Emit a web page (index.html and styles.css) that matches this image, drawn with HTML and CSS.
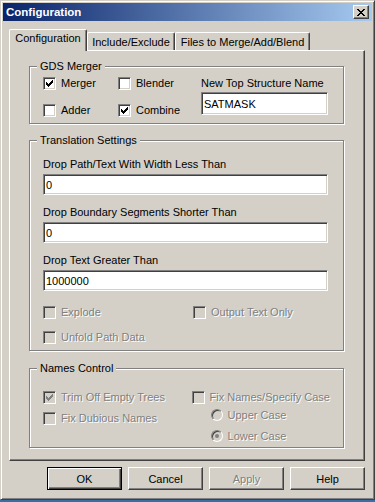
FILE: index.html
```html
<!DOCTYPE html>
<html lang="en">
<head>
    <meta charset="UTF-8">
    <meta name="viewport" content="width=device-width, initial-scale=1.0">
    <title>Configuration</title>
    <link rel="stylesheet" href="styles.css">
</head>
<body>
    <div class="window">
        <div class="titlebar">
            <span class="title">Configuration</span>
            <span class="close-btn">
                <svg width="8" height="7" viewBox="0 0 8 7" shape-rendering="crispEdges">
                    <path d="M0 0h2v1h-2zM6 0h2v1h-2zM1 1h2v1h-2zM5 1h2v1h-2zM2 2h4v1h-4zM3 3h2v1h-2zM2 4h4v1h-4zM1 5h2v1h-2zM5 5h2v1h-2zM0 6h2v1h-2zM6 6h2v1h-2z" fill="#000"/>
                </svg>
            </span>
        </div>

        <div class="dlg-body">
            <div class="tabs">
                <div class="tab active tab-config">Configuration</div>
                <div class="tab tab-include">Include/Exclude</div>
                <div class="tab tab-files">Files to Merge/Add/Blend</div>
            </div>

            <div class="panel">
                <!-- GDS Merger -->
                <div class="group gds">
                    <span class="group-label">GDS Merger</span>
                    <div class="col col-1">
                        <label class="check">
                            <span class="box">
                                <svg width="11" height="11" viewBox="0 0 11 11" shape-rendering="crispEdges"><path class="tick" d="M8 2h1v1h-1zM7 3h2v1h-2zM2 4h1v1h-1zM6 4h3v1h-3zM2 5h2v1h-2zM5 5h3v1h-3zM2 6h5v1h-5zM3 7h3v1h-3zM4 8h1v1h-1z"/></svg>
                            </span>
                            Merger
                        </label>
                        <label class="check"><span class="box"></span>Adder</label>
                    </div>
                    <div class="col col-2">
                        <label class="check"><span class="box"></span>Blender</label>
                        <label class="check">
                            <span class="box">
                                <svg width="11" height="11" viewBox="0 0 11 11" shape-rendering="crispEdges"><path class="tick" d="M8 2h1v1h-1zM7 3h2v1h-2zM2 4h1v1h-1zM6 4h3v1h-3zM2 5h2v1h-2zM5 5h3v1h-3zM2 6h5v1h-5zM3 7h3v1h-3zM4 8h1v1h-1z"/></svg>
                            </span>
                            Combine
                        </label>
                    </div>
                    <div class="col col-3">
                        <span class="field-label">New Top Structure Name</span>
                        <input class="edit edit-name" type="text" value="SATMASK">
                    </div>
                </div>

                <!-- Translation Settings -->
                <div class="group trans">
                    <span class="group-label">Translation Settings</span>
                    <div class="field">
                        <div class="field-label">Drop Path/Text With Width Less Than</div>
                        <input class="edit edit-wide" type="text" value="0">
                    </div>
                    <div class="field">
                        <div class="field-label">Drop Boundary Segments Shorter Than</div>
                        <input class="edit edit-wide" type="text" value="0">
                    </div>
                    <div class="field">
                        <div class="field-label">Drop Text Greater Than</div>
                        <input class="edit edit-wide" type="text" value="1000000">
                    </div>
                    <div class="opts">
                        <label class="check disabled"><span class="box"></span>Explode</label>
                        <label class="check disabled"><span class="box"></span>Output Text Only</label>
                        <label class="check disabled"><span class="box"></span>Unfold Path Data</label>
                    </div>
                </div>

                <!-- Names Control -->
                <div class="group names">
                    <span class="group-label">Names Control</span>
                    <div class="col col-a">
                        <label class="check disabled">
                            <span class="box">
                                <svg width="11" height="11" viewBox="0 0 11 11" shape-rendering="crispEdges"><path class="tick" d="M8 2h1v1h-1zM7 3h2v1h-2zM2 4h1v1h-1zM6 4h3v1h-3zM2 5h2v1h-2zM5 5h3v1h-3zM2 6h5v1h-5zM3 7h3v1h-3zM4 8h1v1h-1z"/></svg>
                            </span>
                            Trim Off Empty Trees
                        </label>
                        <label class="check disabled"><span class="box"></span>Fix Dubious Names</label>
                    </div>
                    <div class="col col-b">
                        <label class="check disabled"><span class="box"></span>Fix Names/Specify Case</label>
                        <label class="check disabled option upper"><span class="radio"></span>Upper Case</label>
                        <label class="check disabled option lower"><span class="radio"><span class="dot"></span></span>Lower Case</label>
                    </div>
                </div>
            </div>

            <div class="buttons">
                <button class="btn default">OK</button>
                <button class="btn">Cancel</button>
                <button class="btn disabled">Apply</button>
                <button class="btn">Help</button>
            </div>
        </div>
    </div>
</body>
</html>
```

FILE: styles.css
```css
html,
body {
    margin: 0;
    background-color: #3a6ea5;
}

body {
    font-family: 'Liberation Sans', Arial, sans-serif;
    font-size: 11px;
    line-height: 13px;
    color: #000;
}

.window {
    width: 375px;
    height: 500px;
    box-sizing: border-box;
    padding: 2px;
    background-color: #d4d0c8;
    border: 1px solid;
    border-color: #d4d0c8 #404040 #404040 #d4d0c8;
    box-shadow: inset 1px 1px 0 #fff, inset -1px -1px 0 #808080;
}

/* title bar */
.titlebar {
    height: 18px;
    display: flex;
    align-items: center;
    justify-content: space-between;
    padding: 0 3px 0 3px;
    background: linear-gradient(to right, #0a246a, #a6caf0);
}

.title {
    color: #fff;
    font-weight: bold;
    font-size: 11.5px;
}

.close-btn {
    width: 16px;
    height: 14px;
    box-sizing: border-box;
    display: flex;
    align-items: center;
    justify-content: center;
    background-color: #d4d0c8;
    border: 1px solid;
    border-color: #fff #404040 #404040 #fff;
    box-shadow: inset -1px -1px 0 #808080;
}

.close-btn svg {
    display: block;
    margin: 0 1px 0 0;
}

.dlg-body {
    padding: 0 7px 0 6px;
}

/* tabs */
.tabs {
    display: flex;
    align-items: flex-end;
    height: 21px;
    margin-top: 8px;
    position: relative;
    z-index: 1;
}

.tab {
    height: 18px;
    box-sizing: border-box;
    padding-top: 3px;
    text-align: center;
    background-color: #d4d0c8;
    border: 1px solid;
    border-bottom: none;
    border-color: #fff #404040 #fff #fff;
    border-radius: 2px 2px 0 0;
    box-shadow: inset -1px 0 0 #808080;
}

.tab.active {
    height: 22px;
    padding-top: 2px;
    margin-bottom: -1px;
}

.tab-config { width: 78px; }
.tab-include { width: 88px; }
.tab-files { width: 135px; }

.panel {
    height: 411px;
    box-sizing: border-box;
    padding: 15px 0 0 19px;
    border: 1px solid;
    border-color: #fff #404040 #404040 #fff;
    box-shadow: inset -1px -1px 0 #808080;
}

/* group boxes */
.group {
    position: relative;
    width: 315px;
    box-sizing: border-box;
    border: 1px solid #808080;
    box-shadow: inset 1px 1px 0 #fff, 1px 1px 0 #fff;
}

.group-label {
    position: absolute;
    top: -7px;
    left: 7px;
    padding: 0 3px;
    background-color: #d4d0c8;
}

.gds {
    display: flex;
    padding: 10px 13px 6px;
}

.trans {
    margin-top: 16px;
    padding: 17px 13px 6px;
}

.names {
    display: flex;
    margin-top: 17px;
    padding: 22px 13px 5px;
}

.col {
    display: flex;
    flex-direction: column;
}

.col-1 { width: 75px; gap: 14px; }
.col-2 { width: 83px; gap: 14px; }
.col-a { width: 150px; gap: 8px; }

/* check boxes and radios */
.check {
    display: flex;
    align-items: center;
    gap: 5px;
    height: 13px;
    white-space: nowrap;
}

.box {
    width: 13px;
    height: 13px;
    box-sizing: border-box;
    flex-shrink: 0;
    background-color: #fff;
    border: 1px solid;
    border-color: #808080 #fff #fff #808080;
    box-shadow: inset 1px 1px 0 #404040, inset -1px -1px 0 #d4d0c8;
}

.box svg {
    display: block;
}

.tick {
    fill: #000;
}

.disabled {
    color: #808080;
    text-shadow: 1px 1px 0 #fff;
}

.disabled .box,
.disabled .radio {
    background-color: #d4d0c8;
}

.disabled .tick {
    fill: #808080;
}

.radio {
    width: 12px;
    height: 12px;
    box-sizing: border-box;
    flex-shrink: 0;
    display: flex;
    align-items: center;
    justify-content: center;
    border-radius: 50%;
    border: 1px solid;
    border-color: #808080 #fff #fff #808080;
    box-shadow: inset 1px 1px 0 #404040, inset -1px -1px 0 #d4d0c8;
}

.dot {
    width: 4px;
    height: 4px;
    border-radius: 50%;
    background-color: #808080;
}

.option {
    height: 12px;
    margin-left: 19px;
}

.upper { margin-top: 5px; }
.lower { margin-top: 9px; }

/* edit fields */
.field + .field {
    margin-top: 11px;
}

.field-label {
    display: block;
    margin-bottom: 3px;
}

.col-3 .field-label {
    margin-bottom: 2px;
}

.edit {
    display: block;
    box-sizing: border-box;
    margin: 0;
    padding: 0 2px;
    font-family: 'Liberation Sans', Arial, sans-serif;
    font-size: 11px;
    color: #000;
    background-color: #fff;
    border: 1px solid;
    border-color: #808080 #fff #fff #808080;
    box-shadow: inset 1px 1px 0 #404040, inset -1px -1px 0 #d4d0c8;
    outline: none;
}

.edit-name {
    width: 127px;
    height: 23px;
}

.edit-wide {
    width: 285px;
    height: 21px;
}

.opts {
    display: grid;
    grid-template-columns: 150px auto;
    row-gap: 12px;
    margin-top: 15px;
}

/* dialog buttons */
.buttons {
    display: flex;
    justify-content: flex-end;
    gap: 6px;
    margin-top: 6px;
}

.btn {
    width: 75px;
    height: 23px;
    box-sizing: border-box;
    margin: 0;
    padding: 0;
    font-family: 'Liberation Sans', Arial, sans-serif;
    font-size: 11px;
    color: #000;
    background-color: #d4d0c8;
    border: 1px solid;
    border-color: #fff #404040 #404040 #fff;
    box-shadow: inset -1px -1px 0 #808080;
}

.btn.default {
    border-color: #000;
    box-shadow: inset 1px 1px 0 #fff, inset -1px -1px 0 #404040, inset -2px -2px 0 #808080;
}

.btn.disabled {
    color: #808080;
    text-shadow: 1px 1px 0 #fff;
}
```
